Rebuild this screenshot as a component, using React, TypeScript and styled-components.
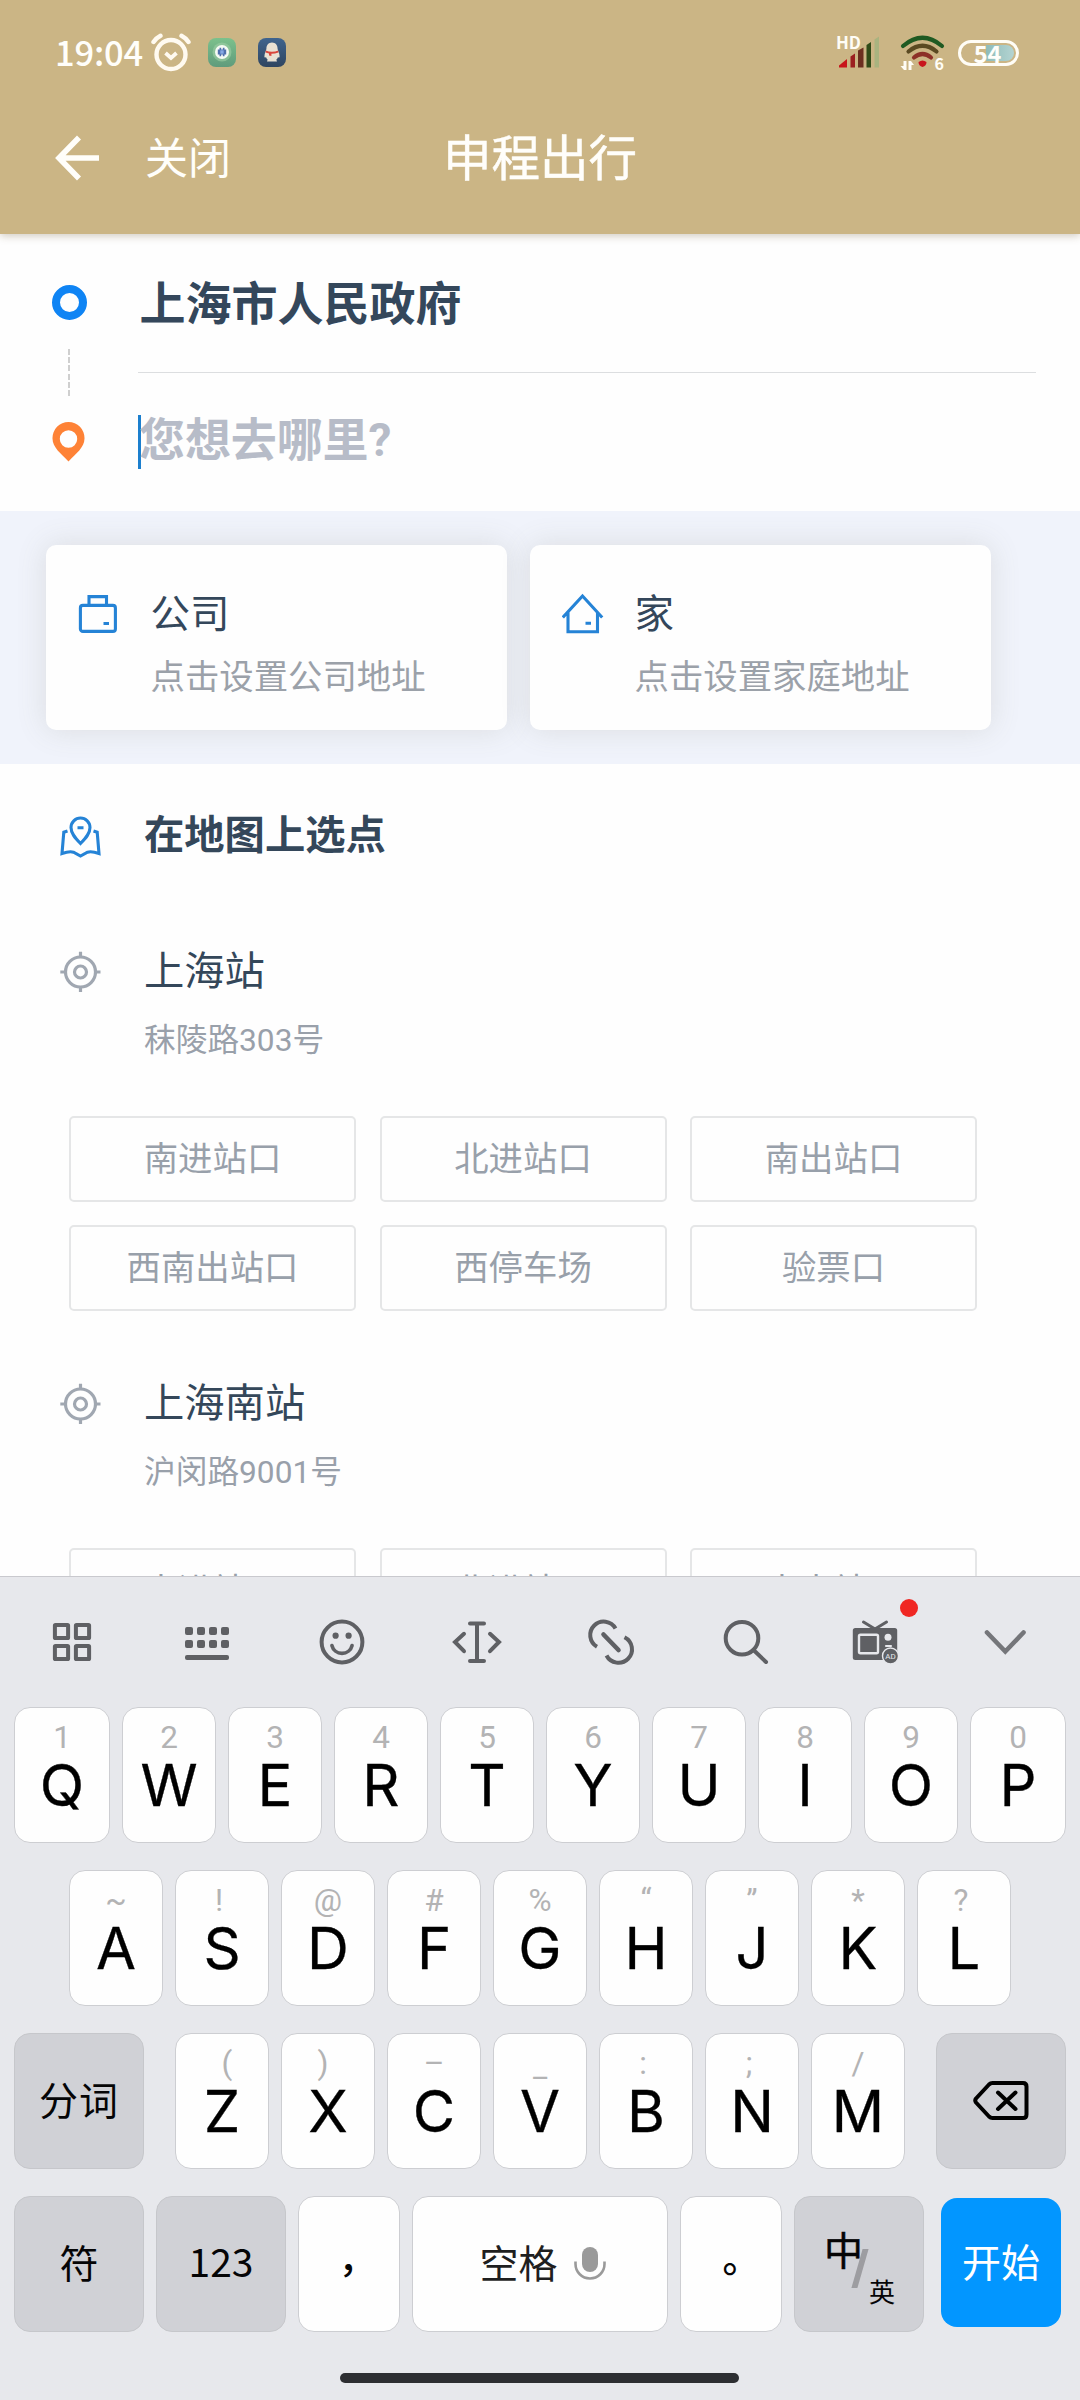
import React from 'react';
import styled, { createGlobalStyle } from 'styled-components';

const GlobalStyle = createGlobalStyle`
  * { box-sizing: border-box; }
  body { margin: 0; background: #fefefe; }
`;

const uiFont = `Roboto, 'Noto Sans CJK SC', sans-serif`;
const cjkFont = `'Noto Sans CJK SC', sans-serif`;

const Screen = styled.div`
  width: 1080px;
  height: 2400px;
  display: flex;
  flex-direction: column;
  overflow: hidden;
  background: #fefefe;
  font-family: ${uiFont};
`;

/* ---------- header ---------- */

const Header = styled.header`
  height: 234px;
  flex: none;
  background: #cbb585;
  color: #fffefa;
  box-shadow: 0 2px 8px rgba(90, 70, 30, 0.28);
  z-index: 1;
`;

const StatusBar = styled.div`
  height: 105px;
  display: flex;
  align-items: center;
  justify-content: space-between;
  padding: 0 61px 0 55px;
`;

const StatusGroup = styled.div`
  display: flex;
  align-items: center;
`;

const Clock = styled.span`
  font: 500 34.5px/48px ${cjkFont};
  width: 96px;
  margin-top: -3px;
  letter-spacing: -0.2px;
`;

const AppBadges = styled.div`
  display: flex;
  gap: 22px;
  margin-left: 17px;
`;

const Battery = styled.div`
  width: 61px;
  height: 26px;
  margin-left: 13px;
  border: 3px solid #fffdf6;
  border-radius: 13px;
  padding: 2px;
  display: flex;
`;

const BatteryLevel = styled.div`
  flex: 1;
  border-radius: 2px 8px 8px 2px;
  background: linear-gradient(90deg, transparent 46%, #8fbcb9 46%, #b4d4d2 100%);
  font: 700 23.5px/16px ${cjkFont};
  text-align: center;
  text-indent: -2px;
`;

const TitleBar = styled.div`
  height: 106px;
  display: grid;
  grid-template-columns: 90px 298px auto;
  align-items: center;
  padding-left: 55px;
`;

const CloseText = styled.span`
  font-size: 43px;
  line-height: 60px;
  padding-top: 2px;
`;

const Title = styled.h1`
  margin: 0;
  font-size: 48.5px;
  font-weight: 400;
  line-height: 60px;
  padding-top: 3px;
  -webkit-text-stroke: 0.5px currentColor;
`;

/* ---------- route ---------- */

const RoutePanel = styled.section`
  flex: none;
  height: 277px;
  display: flex;
  padding-left: 48px;
`;

const RouteTrack = styled.div`
  width: 42px;
  padding-top: 51px;
  display: flex;
  flex-direction: column;
  align-items: center;
`;

const StartDot = styled.div`
  width: 35px;
  height: 35px;
  border: 8.5px solid #0f84f4;
  border-radius: 50%;
`;

const TrackLine = styled.div`
  width: 2px;
  height: 47px;
  margin: 29px 0 26px;
  background: repeating-linear-gradient(#cfcfcf 0 6px, transparent 6px 8.2px);
`;

const RouteFields = styled.div`
  width: 898px;
  margin-left: 48px;
`;

const FromField = styled.div`
  height: 139px;
  padding: 34px 0 0 1.5px;
  border-bottom: 1px solid #dcdee0;
  color: #34475b;
  font-size: 46px;
  font-weight: 700;
  line-height: 72px;
`;

const ToField = styled.div`
  height: 54px;
  margin-top: 42px;
  border-left: 3px solid #1c7fce;
  color: #b7bcc8;
  font-size: 46px;
  font-weight: 700;
  line-height: 50px;
  text-indent: -2px;
  letter-spacing: -0.1px;
`;

/* ---------- shortcuts ---------- */

const Shortcuts = styled.section`
  flex: none;
  height: 253px;
  display: flex;
  gap: 23px;
  padding: 34px 0 0 46px;
  background: #f0f3fb;
  overflow: hidden;
`;

const ShortcutCard = styled.div`
  width: 461px;
  height: 185px;
  display: grid;
  grid-template-columns: 72.5px auto;
  align-content: start;
  padding: 42px 0 0 32px;
  border-radius: 10px;
  background: #fefefe;
  box-shadow: 0 0 30px rgba(110, 110, 90, 0.16);
`;

const ShortcutIcon = styled.div`
  padding-top: 6px;
  height: 56px;
`;

const ShortcutName = styled.div`
  color: #34475b;
  font-size: 39.5px;
  line-height: 56px;
`;

const ShortcutHint = styled.div`
  grid-column: 2;
  color: #9ba1a9;
  font-size: 34.4px;
  line-height: 50px;
  padding-top: 9px;
`;

/* ---------- list ---------- */

const PlaceList = styled.main`
  flex: none;
  height: 812px;
  overflow: hidden;
`;

const PlaceRow = styled.div<{ $top: number }>`
  display: grid;
  grid-template-columns: 84px auto;
  padding: ${p => p.$top}px 0 0 60px;
`;

const PlaceIcon = styled.div`
  padding-top: 10px;
  height: 60px;
`;

const PlaceName = styled.div<{ $strong?: boolean }>`
  color: #34475a;
  font-size: 40.3px;
  font-weight: ${p => (p.$strong ? 700 : 400)};
  line-height: ${p => (p.$strong ? 59 : 61)}px;
  height: 60px;
`;

const PlaceAddress = styled.div`
  grid-column: 2;
  color: #99a0aa;
  font-size: 31.7px;
  line-height: 48px;
  height: 63px;
  padding-top: 16px;
`;

const Gates = styled.div`
  display: grid;
  grid-template-columns: repeat(3, 287px);
  grid-auto-rows: 86px;
  gap: 23px 23.5px;
  padding: 52px 0 0 69px;
`;

const Gate = styled.div`
  border: 2px solid #e5e6e7;
  border-radius: 5px;
  color: #98a0aa;
  font-size: 34.4px;
  line-height: 82px;
  text-align: center;
`;

/* ---------- keyboard ---------- */

const Keyboard = styled.section`
  flex: none;
  height: 824px;
  background: #e7e8ec;
  border-top: 1px solid #c9c9ce;
  display: flex;
  flex-direction: column;
  align-items: center;
`;

const Toolbar = styled.div`
  width: 100%;
  height: 130px;
  display: flex;
  align-items: center;
  padding-left: 4px;
  color: #5f6064;
`;

const Tool = styled.div<{ $w: number }>`
  width: ${p => p.$w}px;
  position: relative;
  display: flex;
  justify-content: center;
`;

const Dot = styled.span`
  position: absolute;
  width: 18px;
  height: 18px;
  left: 87px;
  top: -11px;
  border-radius: 50%;
  background: #f02723;
`;

const KeyRows = styled.div`
  display: flex;
  flex-direction: column;
  gap: 27px;
`;

const KeyRow = styled.div`
  display: flex;
  justify-content: center;
  align-items: flex-start;
  gap: 12px;
  width: 1052px;
  height: 136px;
`;

const Key = styled.div<{ $w?: number; $tone?: 'grey'; $ml?: number; $mr?: number }>`
  width: ${p => p.$w ?? 94}px;
  height: 136px;
  margin-left: ${p => p.$ml ?? 0}px;
  margin-right: ${p => p.$mr ?? 0}px;
  border-radius: 16px;
  border: 1px solid ${p => (p.$tone ? '#c6c7cb' : '#cdced2')};
  background: ${p => (p.$tone ? '#d0d1d6' : '#fefefe')};
  color: #050506;
  display: flex;
  align-items: center;
  justify-content: center;
  font: 400 39px/60px ${cjkFont};
`;

const LetterKey = styled(Key)`
  flex-direction: column;
  justify-content: flex-start;
  padding-top: 12px;
`;

const Hint = styled.span<{ $shift: number; $drop: number }>`
  height: 35px;
  margin-left: ${p => p.$shift * 2}px;
  padding-top: ${p => p.$drop}px;
  color: #b3b3b4;
  font: 400 31.5px/36px Roboto, sans-serif;
`;

const Letter = styled.span`
  color: #000;
  font: 400 58px/60px Inter, sans-serif;
  -webkit-text-stroke: 0.3px #000;
`;

const KeyText = styled.span<{ $gap?: number; $drop?: number }>`
  letter-spacing: ${p => p.$gap ?? 0}px;
  margin-top: ${p => p.$drop ?? -6}px;
`;

const Punct = styled.span<{ $x: number }>`
  width: 16px;
  margin: -16px 0 0 ${p => p.$x}px;
  font-weight: 500;
  font-size: 38px;
`;

const SpaceLabel = styled(KeyText)`
  color: #1f1f1f;
  margin-left: 5px;
  margin-right: 16px;
`;

const LangLabels = styled.div`
  width: 68px;
  height: 76px;
  display: grid;
  grid-template-columns: 34px 10px 24px;
  grid-template-rows: 46px 30px;
`;

const LangMain = styled.span`
  font: 400 39px/45px ${cjkFont};
  margin-left: -1px;
  -webkit-text-stroke: 0.5px currentColor;
`;

const LangSlash = styled.div`
  grid-row: 1 / 3;
  grid-column: 2;
  width: 6px;
  height: 39px;
  margin: 23px 0 0 -2px;
  background: #9d9da1;
  transform: skewX(-16deg);
`;

const LangAlt = styled.span`
  grid-row: 2;
  grid-column: 3;
  font: 400 26px/38px ${cjkFont};
`;

const StartKey = styled.div`
  width: 120px;
  height: 129px;
  margin: 2px 5px 0 5px;
  border-radius: 16px;
  background: #0296ff;
  color: #fff;
  display: flex;
  align-items: center;
  justify-content: center;
  font: 400 39px/60px ${cjkFont};
`;

const HomeBar = styled.div`
  width: 399px;
  height: 10px;
  margin: 41px 2px 0 0;
  border-radius: 5px;
  background: #2d2e32;
`;

/* ---------- drawings ---------- */

const AlarmIcon = () => (
  <svg width="40" height="40" viewBox="0 0 40 40" fill="none" stroke="#fffaf0" strokeWidth="4.4" strokeLinecap="round">
    <circle cx="20" cy="21.500" r="14.500" />
    <path d="M14.500 20 20 25 25.500 20" strokeWidth="3.800" strokeLinecap="butt" />
    <path d="M2.500 9Q5 5 9.500 2.700M37.500 9Q35 5 30.500 2.700" />
  </svg>
);

const GreenBadge = () => (
  <svg width="28" height="29" viewBox="0 0 28 29">
    <defs>
      <linearGradient id="gb" x1="0" y1="0" x2="0" y2="1">
        <stop offset="0" stopColor="#7cc18c" />
        <stop offset="1" stopColor="#5f9b7c" />
      </linearGradient>
    </defs>
    <rect width="28" height="29" rx="8" fill="url(#gb)" />
    <circle cx="14" cy="14" r="9.5" fill="#9fcfa5" opacity=".6" />
    <circle cx="14" cy="14" r="7" fill="#f6fbf4" />
    <path d="M9.800 11.500h8.400v5H9.800zM11.500 9.800h1.700v8.400h-1.700zM14.800 9.800h1.700v8.400h-1.700z" fill="#5070ae" />
    <path d="M12.3 12.3h3.4v3.4h-3.4z" fill="#86a8e4" />
  </svg>
);

const PenguinBadge = () => (
  <svg width="28" height="29" viewBox="0 0 28 29">
    <defs>
      <linearGradient id="pb" x1="0" y1="0" x2="0" y2="1">
        <stop offset="0" stopColor="#3f648e" />
        <stop offset="1" stopColor="#2f4560" />
      </linearGradient>
    </defs>
    <rect width="28" height="29" rx="8" fill="url(#pb)" />
    <path d="M14 4.6c-3.6 0-5.6 2.8-5.6 6.2 0 1.6-2 4.2-2 7.6 0 1 .8 1.6 1.6.6.4 1.6 1.2 2.4 2 3-1.4.4-1.4 1.6 0 1.6h8c1.4 0 1.4-1.2 0-1.6.8-.6 1.6-1.4 2-3 .8 1 1.6.4 1.6-.6 0-3.4-2-6-2-7.6 0-3.4-2-6.2-5.6-6.2z" fill="#e9e1d3" />
    <path d="M7.6 12.6q6.4 2.400 12.800 0v2q-3.400 1.200-7 1.200v2.200l-2.400-.6v-1.800q-2-.4-3.400-1z" fill="#d9453c" />
  </svg>
);

const SignalIcon = () => (
  <svg width="46" height="34" viewBox="0 0 46 34" overflow="visible">
    <text x="-2" y="13" fontFamily="Noto Sans CJK SC, sans-serif" fontWeight="700" fontSize="17" fill="#fffdf6">HD</text>
    <path d="M1 31.500v-2l8-6.500v8.500z" fill="#c8151c" />
    <path d="M12.500 31.500v-11l4.500-3v14z" fill="#9c1f20" />
    <path d="M20 31.500v-17l5.500-3v20z" fill="#6c2f20" />
    <path d="M28.500 31.500V9l4.500-3v25.500z" fill="#2f4b18" />
    <path d="M36.500 31.500V3.500l4.500-3v31z" fill="#a9b37f" />
  </svg>
);

const WifiIcon = () => (
  <svg width="44" height="36" viewBox="0 0 44 36" fill="none" strokeWidth="4.2" strokeLinecap="round" overflow="visible">
    <path d="M2 11Q21.500-5.500 41 11" stroke="#1f5a22" />
    <path d="M7.500 16.500Q21.500 5 35.500 16.500" stroke="#5a4a22" />
    <path d="M13 22.500Q21.500 15.500 30 22.500" stroke="#8c3028" />
    <path d="M17.500 27q4-3.200 8 0 0 4-4 5-4-1-4-5z" fill="#c8151c" />
    <g fill="#fffdf6">
      <path d="M2.500 26h3v9H3l-3.500-4h3zM7.500 35v-9H10l3 4h-2.500v5z" />
      <text x="33.500" y="34.500" fontFamily="Noto Sans CJK SC, sans-serif" fontWeight="700" fontSize="16">6</text>
    </g>
  </svg>
);

const BackArrow = () => (
  <svg width="46" height="46" viewBox="0 0 46 46" fill="none" stroke="#fffefa" strokeWidth="5.600">
    <path d="M44 23H5M24 2.500 4 23l20 20.500" />
  </svg>
);

const PinIcon = () => (
  <svg width="34" height="40" viewBox="0 0 34 40">
    <path fillRule="evenodd" fill="#fe8236" d="M16.500 0A16 16 0 0 1 32.500 16.500C32.500 25.500 24 31.500 16.500 39.500 9 31.500.5 25.500.5 16.500A16 16 0 0 1 16.500 0zM16.500 8.300a8.700 8.700 0 1 0 0 17.400 8.700 8.700 0 0 0 0-17.400z" />
  </svg>
);

const blueStroke = { fill: 'none', stroke: '#2583d6', strokeWidth: 3.1 };

const BagIcon = () => (
  <svg width="40" height="42" viewBox="0 0 40 42" {...blueStroke}>
    <rect x="2.400" y="12.400" width="35" height="26" rx="2.500" />
    <path d="M11 12V3.600h17.500V12M25.500 30.500H31" />
  </svg>
);

const HouseIcon = () => (
  <svg width="42" height="42" viewBox="0 0 42 42" {...blueStroke}>
    <path d="M.8 24.500 20.500 3 40.200 24.500M6 19.500v19.300h29.500V19.500M23.500 30.300H29" />
  </svg>
);

const MapIcon = () => (
  <svg width="41" height="42" viewBox="0 0 41 42" {...blueStroke}>
    <path d="M20.500 27.500C15 22 11 17.500 11 11.500a9.500 9.500 0 0 1 19 0C30 17.500 26 22 20.500 27.500zM17.500 11.800h6" />
    <path d="M7.500 15 3.800 16.200 2 37.500Q9.500 35 13.500 36.200L20.500 40 27.500 36.200Q31.500 35 39 37.500L37.200 16.200 33.500 15" />
  </svg>
);

const TargetIcon = () => (
  <svg width="41" height="42" viewBox="0 0 41 42" fill="none" stroke="#a0a7b1" strokeWidth="3.200">
    <circle cx="20.500" cy="21" r="15" />
    <circle cx="20.500" cy="21" r="6" />
    <path d="M20.500.8v5M20.500 36v5M.3 21h5M35.500 21h5" />
  </svg>
);

const ToolSvg = ({ children }: { children: React.ReactNode }) => (
  <svg width="64" height="64" viewBox="0 0 64 64" fill="none" stroke="currentColor" strokeWidth="4" strokeLinecap="round">
    {children}
  </svg>
);

const GridTool = () => (
  <ToolSvg>
    {[14.9, 35.9].map(x => [14.9, 35.9].map(y => (
      <rect key={`${x}-${y}`} x={x} y={y} width="13.200" height="13.200" rx=".6" />
    )))}
  </ToolSvg>
);

const KeyboardTool = () => (
  <ToolSvg>
    <g fill="currentColor" stroke="none">
      {[10, 22, 34, 46].map(x => [17, 30].map(y => (
        <rect key={`${x}-${y}`} x={x} y={y} width="8" height="8" rx="2" />
      )))}
      <rect x="10" y="45" width="44" height="5" rx="2" />
    </g>
  </ToolSvg>
);

const SmileTool = () => (
  <ToolSvg>
    <circle cx="32" cy="32" r="20.400" />
    <g fill="currentColor" stroke="none">
      <circle cx="25.600" cy="25.700" r="3.100" />
      <circle cx="38.600" cy="25.700" r="3.100" />
    </g>
    <path d="M21.900 35.500a10.400 10.400 0 0 0 20.200 0" strokeWidth="3.600" />
  </ToolSvg>
);

const CursorTool = () => (
  <ToolSvg>
    <path d="M25 13.500h14M25 51h14M32 14v36M19 23.800 10 32l9 9.200M45 23.800 54 32l-9 9.200" />
  </ToolSvg>
);

const LinkTool = () => (
  <ToolSvg>
    <path d="M36.500 18.500A13.500 13.500 0 1 0 18 36.800M45.500 27.200A13.500 13.500 0 1 1 27.500 45.500" strokeLinecap="butt" />
    <path d="M24.500 24.500 39.500 40" strokeWidth="4.600" />
  </ToolSvg>
);

const SearchTool = () => (
  <ToolSvg>
    <circle cx="28" cy="28.200" r="16.300" />
    <path d="M39.500 40 52 52" />
  </ToolSvg>
);

const TvTool = () => (
  <ToolSvg>
    <path d="M20.500 12 32 19 43.500 12" strokeWidth="3" />
    <rect x="9.800" y="18" width="44.400" height="32" rx="2.500" fill="currentColor" stroke="none" />
    <rect x="16" y="24.700" width="19" height="18.600" rx="1.500" stroke="#e7e8ec" strokeWidth="2.400" />
    <circle cx="45" cy="27.300" r="3.500" fill="#e7e8ec" stroke="none" />
    <path d="M43 36h5" stroke="#e7e8ec" strokeWidth="2.200" />
    <circle cx="47.500" cy="46" r="8" fill="currentColor" stroke="#e7e8ec" strokeWidth="1.400" />
    <text x="47.600" y="49" textAnchor="middle" fontFamily="Roboto, sans-serif" fontSize="8" fill="#e7e8ec" stroke="none">AD</text>
  </ToolSvg>
);

const CollapseTool = () => (
  <ToolSvg>
    <path d="M14 22.500 32.300 41.500 50.500 22.500" stroke="#75767a" strokeWidth="4.600" />
  </ToolSvg>
);

const BackspaceIcon = () => (
  <svg width="58" height="44" viewBox="0 0 58 44" fill="none" stroke="#000" strokeWidth="4" strokeLinecap="round" strokeLinejoin="round">
    <path d="M20.500 4H51q3.500 0 3.500 3.500v28Q54.500 39 51 39H20.500Q18.500 39 17 37.500L4 23.500Q2.500 21.500 4 19.500L17 5.500Q18.500 4 20.500 4z" />
    <path d="M26 13.500 43.500 30M43.500 13.500 26 30" />
  </svg>
);

const MicIcon = () => (
  <svg width="32" height="34" viewBox="0 0 32 34" fill="none">
    <rect x="8" y="0" width="16" height="25" rx="8" fill="#9a9a9a" />
    <path d="M1.500 14.500v2.500a14.500 14.500 0 0 0 29 0v-2.500" stroke="#9a9a9a" strokeWidth="2.600" />
  </svg>
);

/* ---------- data ---------- */

type KeyDef = [letter: string, hint: string, shift?: number, drop?: number];

const row1: KeyDef[] = [['Q', '1'], ['W', '2'], ['E', '3'], ['R', '4'], ['T', '5'], ['Y', '6'], ['U', '7'], ['I', '8'], ['O', '9'], ['P', '0']];
const row2: KeyDef[] = [['A', '~'], ['S', '!', -3], ['D', '@'], ['F', '#'], ['G', '%'], ['H', '“'], ['J', '”'], ['K', '*'], ['L', '?', -3]];
const row3: KeyDef[] = [['Z', '(', 5], ['X', ')', -5], ['C', '–'], ['V', '_', 0, 3], ['B', ':', -3], ['N', ';', -3], ['M', '/']];

const stations = [
  { name: '上海站', address: '秣陵路303号', top: 75, gates: ['南进站口', '北进站口', '南出站口', '西南出站口', '西停车场', '验票口'] },
  { name: '上海南站', address: '沪闵路9001号', top: 62, gates: ['南进站口', '北进站口', '南出站口'] },
];

const tools: { w: number; Icon: () => React.ReactElement; dot?: boolean }[] = [
  { w: 136, Icon: GridTool }, { w: 134, Icon: KeyboardTool }, { w: 135, Icon: SmileTool },
  { w: 135, Icon: CursorTool }, { w: 134, Icon: LinkTool }, { w: 135, Icon: SearchTool },
  { w: 123, Icon: TvTool, dot: true }, { w: 138, Icon: CollapseTool },
];

const renderKeys = (keys: KeyDef[], edge?: number) =>
  keys.map(([letter, hint, shift, drop], i) => (
    <LetterKey key={letter} $w={edge && (i === 0 || i === keys.length - 1) ? edge : 94}>
      <Hint $shift={shift ?? 0} $drop={drop ?? 0}>{hint}</Hint>
      <Letter>{letter}</Letter>
    </LetterKey>
  ));

export default function App() {
  return (
    <Screen>
      <GlobalStyle />
      <Header>
        <StatusBar>
          <StatusGroup>
            <Clock>19:04</Clock>
            <AlarmIcon />
            <AppBadges>
              <GreenBadge />
              <PenguinBadge />
            </AppBadges>
          </StatusGroup>
          <StatusGroup>
            <SignalIcon />
            <svg width="17" height="1" />
            <WifiIcon />
            <Battery>
              <BatteryLevel>54</BatteryLevel>
            </Battery>
          </StatusGroup>
        </StatusBar>
        <TitleBar>
          <BackArrow />
          <CloseText>关闭</CloseText>
          <Title>申程出行</Title>
        </TitleBar>
      </Header>

      <RoutePanel>
        <RouteTrack>
          <StartDot />
          <TrackLine />
          <PinIcon />
        </RouteTrack>
        <RouteFields>
          <FromField>上海市人民政府</FromField>
          <ToField>您想去哪里?</ToField>
        </RouteFields>
      </RoutePanel>

      <Shortcuts>
        <ShortcutCard>
          <ShortcutIcon><BagIcon /></ShortcutIcon>
          <ShortcutName>公司</ShortcutName>
          <ShortcutHint>点击设置公司地址</ShortcutHint>
        </ShortcutCard>
        <ShortcutCard>
          <ShortcutIcon><HouseIcon /></ShortcutIcon>
          <ShortcutName>家</ShortcutName>
          <ShortcutHint>点击设置家庭地址</ShortcutHint>
        </ShortcutCard>
      </Shortcuts>

      <PlaceList>
        <PlaceRow $top={42}>
          <PlaceIcon><MapIcon /></PlaceIcon>
          <PlaceName $strong>在地图上选点</PlaceName>
        </PlaceRow>
        {stations.map(s => (
          <React.Fragment key={s.name}>
            <PlaceRow $top={s.top}>
              <PlaceIcon><TargetIcon /></PlaceIcon>
              <PlaceName>{s.name}</PlaceName>
              <PlaceAddress>{s.address}</PlaceAddress>
            </PlaceRow>
            <Gates>
              {s.gates.map(g => <Gate key={g}>{g}</Gate>)}
            </Gates>
          </React.Fragment>
        ))}
      </PlaceList>

      <Keyboard>
        <Toolbar>
          {tools.map(({ w, Icon, dot }, i) => (
            <Tool key={i} $w={w}>
              <Icon />
              {dot && <Dot />}
            </Tool>
          ))}
        </Toolbar>
        <KeyRows>
          <KeyRow>{renderKeys(row1, 96)}</KeyRow>
          <KeyRow>{renderKeys(row2)}</KeyRow>
          <KeyRow>
            <Key $w={130} $tone="grey" $mr={19}><KeyText $gap={1}>分词</KeyText></Key>
            {renderKeys(row3)}
            <Key $w={130} $tone="grey" $ml={19}><BackspaceIcon /></Key>
          </KeyRow>
          <KeyRow>
            <Key $w={130} $tone="grey"><KeyText>符</KeyText></Key>
            <Key $w={130} $tone="grey"><KeyText $drop={-8}>123</KeyText></Key>
            <Key $w={102}><Punct $x={-5}>，</Punct></Key>
            <Key $w={256}>
              <SpaceLabel>空格</SpaceLabel>
              <MicIcon />
            </Key>
            <Key $w={102}><Punct $x={-1}>。</Punct></Key>
            <Key $w={130} $tone="grey">
              <LangLabels>
                <LangMain>中</LangMain>
                <LangSlash />
                <LangAlt>英</LangAlt>
              </LangLabels>
            </Key>
            <StartKey><KeyText>开始</KeyText></StartKey>
          </KeyRow>
        </KeyRows>
        <HomeBar />
      </Keyboard>
    </Screen>
  );
}
